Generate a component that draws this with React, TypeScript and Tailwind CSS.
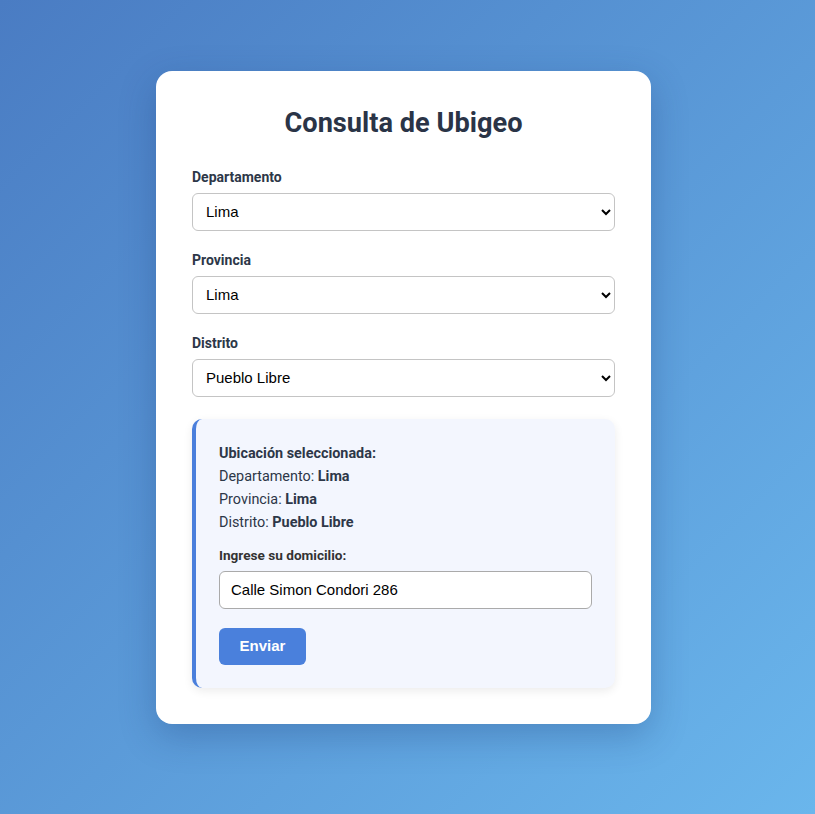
import { useState } from "react";

const field = "w-full h-[38px] rounded-md border bg-white text-[15px] text-black font-['Liberation_Sans',Arial,sans-serif] outline-none";

function Campo({ label, value, options, onChange }: { label: string; value: string; options: string[]; onChange: (v: string) => void }) {
  return (
    <div className="mb-[21.5px]">
      <label className="block mb-[7.5px] text-[14px] leading-[16px] font-bold text-[#2d3748]">{label}</label>
      <select className={field + " border-[#c4c4c4] pl-[9px] pr-[10px]"} value={value} onChange={(e) => onChange(e.target.value)}>
        {options.map((o) => (
          <option key={o}>{o}</option>
        ))}
      </select>
    </div>
  );
}

export default function App() {
  const [dep, setDep] = useState("Lima");
  const [prov, setProv] = useState("Lima");
  const [dist, setDist] = useState("Pueblo Libre");
  const [dom, setDom] = useState("Calle Simon Condori 286");

  return (
    <div className="min-h-screen w-full bg-[linear-gradient(135deg,#4a7cc3_0%,#6ab6ec_100%)] flex justify-center items-start pt-[71px] pr-2 font-['Roboto',sans-serif]">
      <div className="w-[495px] bg-white rounded-2xl shadow-[0_12px_36px_rgba(20,50,110,0.28)] px-9 pt-[34px] pb-[36px]">
        <h1 className="text-center text-[27.2px] font-bold text-[#2a3447] mb-[28px] leading-[36px]">Consulta de Ubigeo</h1>

        <Campo label="Departamento" value={dep} options={["Lima", "Arequipa", "Cusco"]} onChange={setDep} />
        <Campo label="Provincia" value={prov} options={["Lima", "Callao", "Huaral"]} onChange={setProv} />
        <Campo label="Distrito" value={dist} options={["Pueblo Libre", "Miraflores", "Lince"]} onChange={setDist} />

        <div className="mt-[22px] rounded-[10px] border-l-4 border-[#4a7fdc] bg-[#f3f6fe] px-[23px] py-[23px] shadow-[0_3px_10px_rgba(0,0,0,0.08)]">
          <div className="text-[14.4px] leading-[23px] text-[#2d3748]">
            <p className="font-bold">Ubicación seleccionada:</p>
            <p>Departamento: <b>{dep}</b></p>
            <p>Provincia: <b>{prov}</b></p>
            <p>Distrito: <b>{dist}</b></p>
          </div>
          <label className="block mt-[14px] mb-2 text-[13.6px] leading-[15px] font-bold text-[#333]">Ingrese su domicilio:</label>
          <input className={field + " border-[#aaaaaa] px-[11px]"} value={dom} onChange={(e) => setDom(e.target.value)} />
          <button className="block mt-[19px] h-[37px] w-[87px] rounded-md bg-[#4a80dc] text-white font-bold text-[15px] font-['Liberation_Sans',Arial,sans-serif]">
            Enviar
          </button>
        </div>
      </div>
    </div>
  );
}
